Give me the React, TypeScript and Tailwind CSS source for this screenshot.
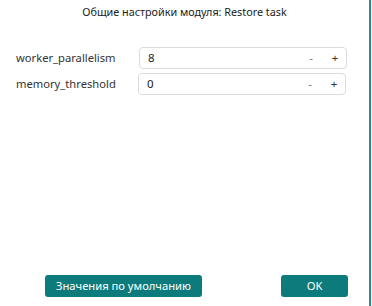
import React from "react";

function NumField({ value }: { value: string }) {
  return (
    <div className="flex h-[22px] w-[208px] items-center rounded-[4px] border border-[#dcdcdc] bg-white pl-[8px] pr-[6px] text-[11.5px] text-[#222]">
      <span className="flex-1">{value}</span>
      <span className="w-[10px] text-center text-[#777]">-</span>
      <span className="ml-[14px] w-[10px] text-center text-[#333]">+</span>
    </div>
  );
}

export default function App() {
  return (
    <div
      className="flex h-[306px] w-[372px] bg-white"
      style={{ fontFamily: '"Noto Sans", "Open Sans", sans-serif' }}
    >
      <div className="flex h-full w-[369px] flex-col">
        <div className="pt-[3px] text-center text-[10.8px] leading-[18px] text-[#222]">
          Общие настройки модуля: Restore task
        </div>
        <div className="mt-[26px] flex flex-col gap-[4px] pl-[16px]">
          <div className="flex items-center">
            <span className="w-[123px] text-[11.2px] text-[#333]">worker_parallelism</span>
            <NumField value="8" />
          </div>
          <div className="flex items-center">
            <span className="w-[122px] text-[11.2px] text-[#333]">memory_threshold</span>
            <NumField value="0" />
          </div>
        </div>
        <div className="mt-auto mb-[9px] flex items-center pl-[45px] pr-[21px]">
          <button className="h-[22px] w-[157px] rounded-[3px] bg-[#0d7b7b] text-[11.2px] text-white">
            Значения по умолчанию
          </button>
          <button className="ml-auto h-[22px] w-[67px] rounded-[3px] bg-[#0d7b7b] text-[11.2px] text-white">
            OK
          </button>
        </div>
      </div>
      <div className="h-full w-[2px] bg-[#2a8c92]" />
      <div className="h-full w-[1px] bg-white" />
    </div>
  );
}
